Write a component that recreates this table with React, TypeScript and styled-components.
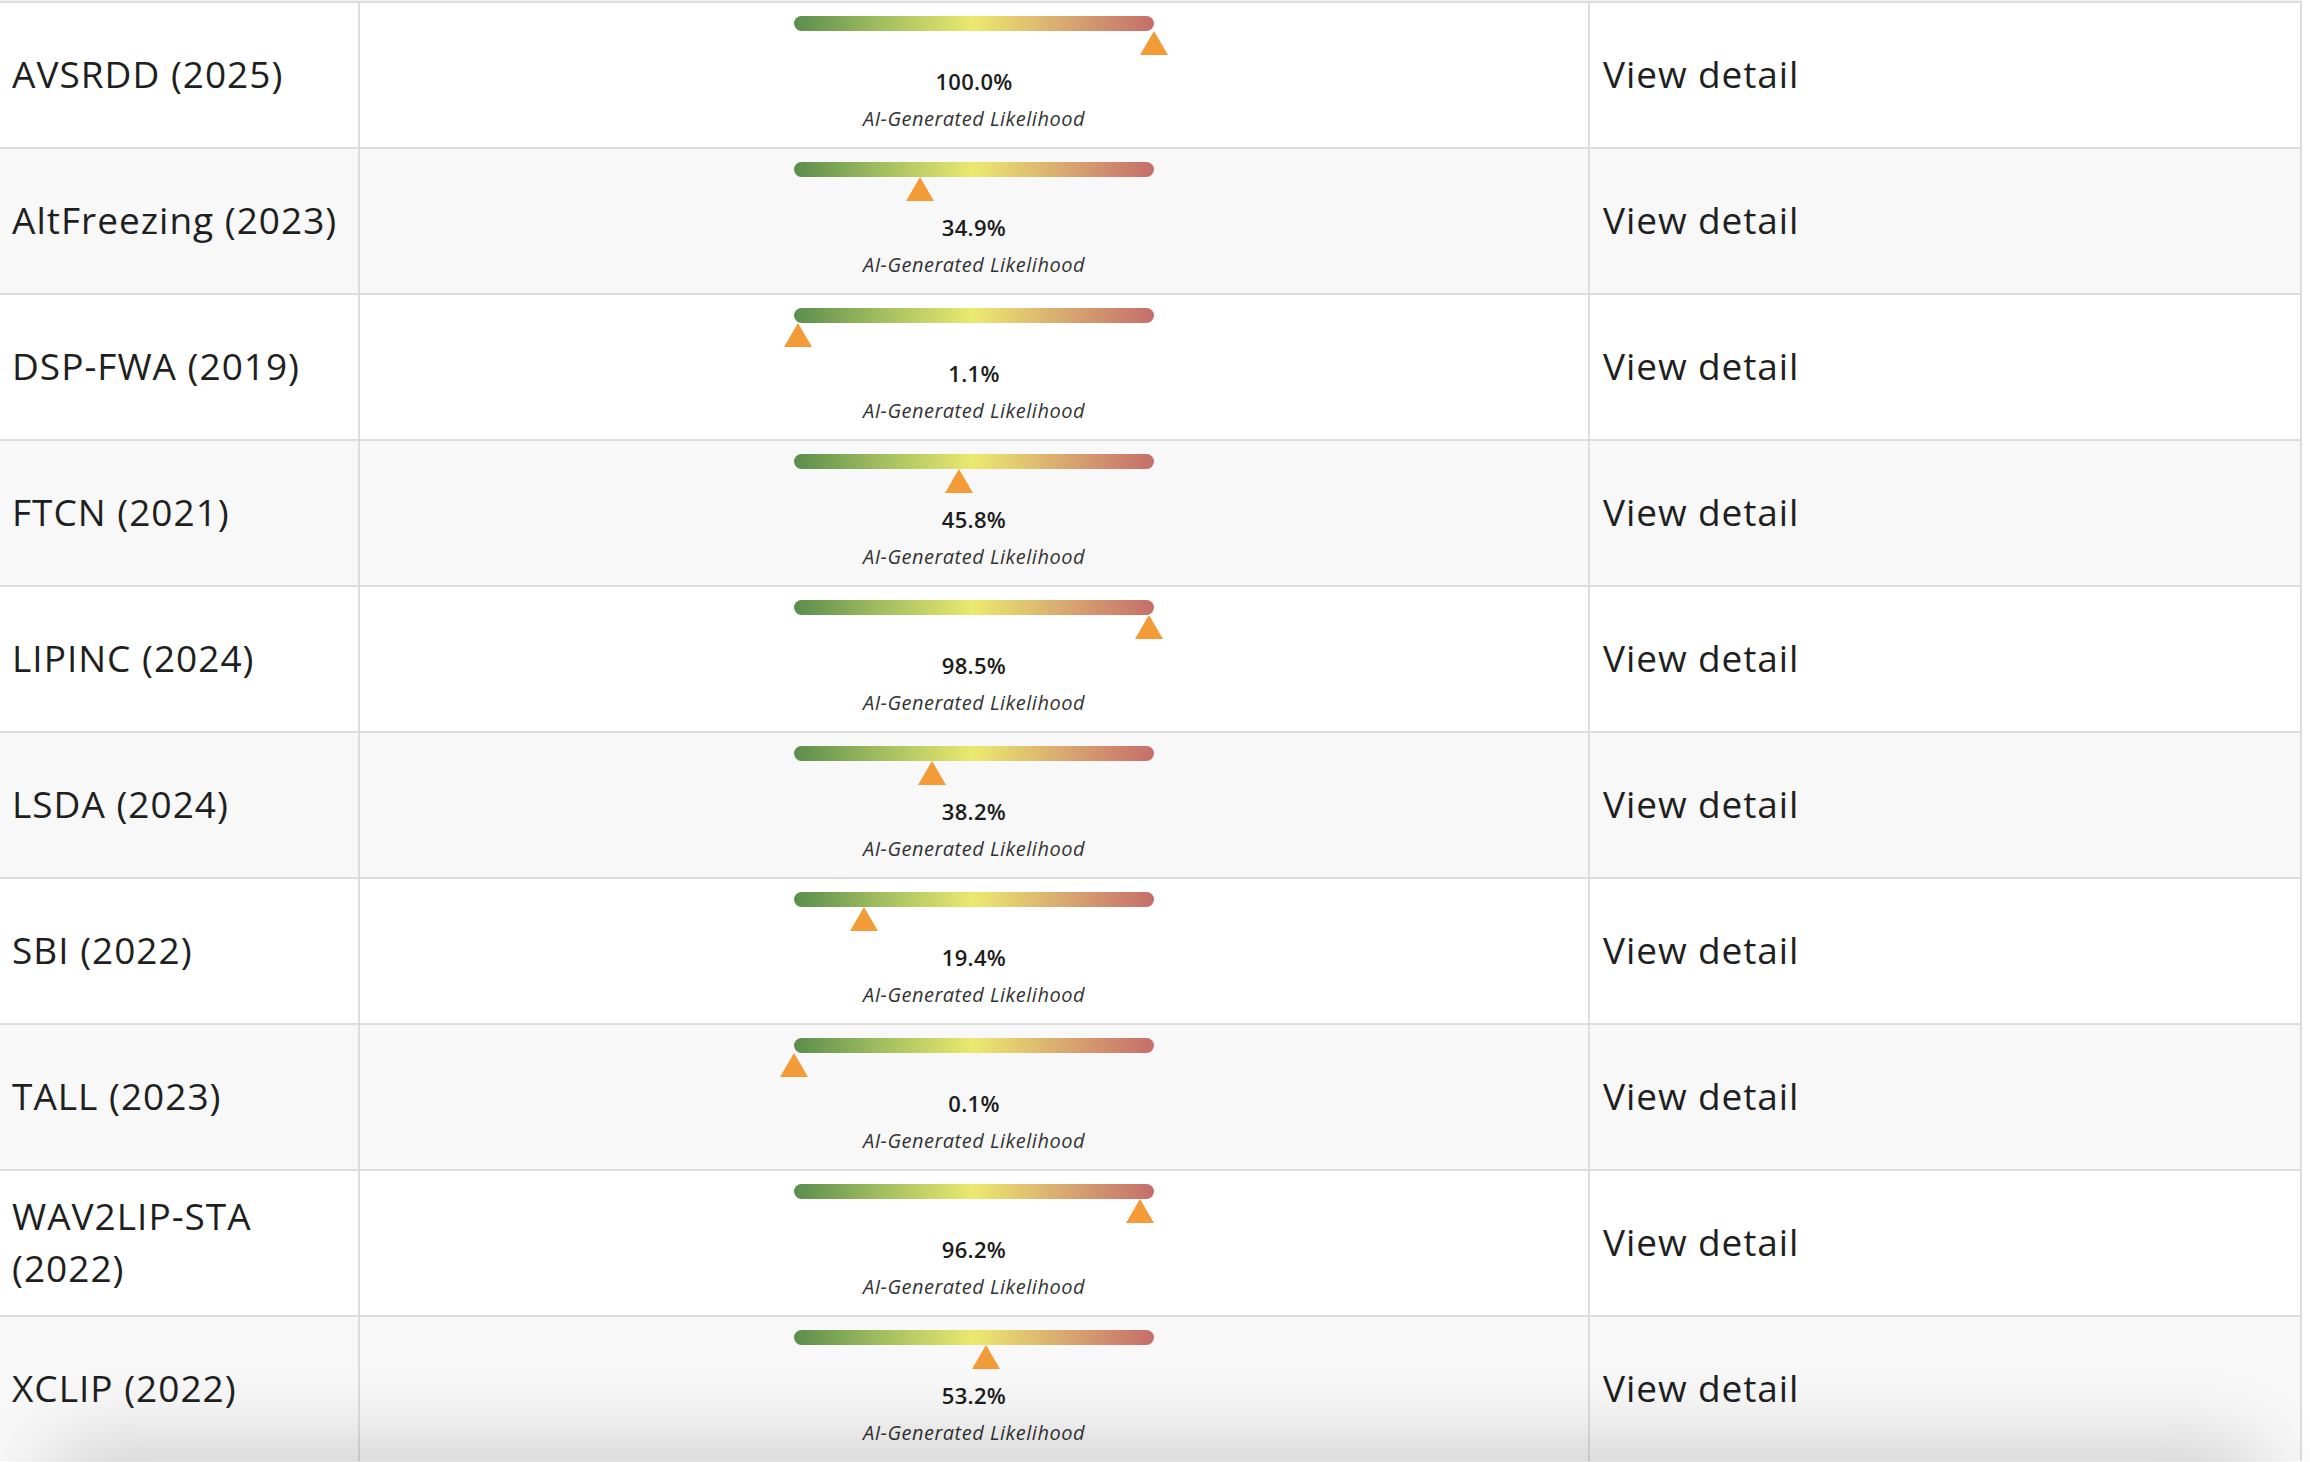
import React from "react";
import styled, { createGlobalStyle } from "styled-components";

const GlobalStyle = createGlobalStyle`
  html, body {
    margin: 0;
    padding: 0;
    background: #ffffff;
    overflow: hidden;
  }
  body {
    font-family: "Open Sans", "Noto Sans", sans-serif;
    color: #222222;
  }
`;

const Page = styled.div`
  width: 2310px;
  height: 1462px;
  overflow: hidden;
  position: relative;
  padding-top: 1px;
  box-sizing: border-box;
`;

const TopStrip = styled.div`
  position: absolute;
  top: 0;
  left: 0;
  width: 2302px;
  height: 1px;
  background: #f2f2f2;
`;

const Table = styled.div`
  width: 2302px;
  display: flex;
  flex-direction: column;
`;

const Row = styled.div<{ $shade: boolean }>`
  display: grid;
  grid-template-columns: 360px 1230px 712px;
  height: 146px;
  box-sizing: border-box;
  border-top: 2px solid #dddddd;
  background: ${(p) => (p.$shade ? "#f8f8f8" : "#ffffff")};
`;

const Cell = styled.div`
  box-sizing: border-box;
  border-right: 2px solid #dddddd;
  display: flex;
  min-width: 0;
`;

const NameCell = styled(Cell)`
  align-items: center;
  padding: 0 6px 3px 12px;
  font-size: 37px;
  line-height: 52px;
  color: #1f1f1f;
  letter-spacing: 1px;
`;

const ScoreCell = styled(Cell)`
  flex-direction: column;
  align-items: center;
  padding-top: 13px;
`;

const DetailCell = styled(Cell)`
  align-items: center;
  padding: 0 13px 3px 13px;
`;

const DetailLink = styled.a`
  font-size: 37px;
  line-height: 52px;
  color: #1f1f1f;
  text-decoration: none;
  letter-spacing: 0.9px;
  cursor: pointer;
`;

const Gauge = styled.div`
  position: relative;
  width: 360px;
  height: 39px;
`;

const Bar = styled.div`
  width: 360px;
  height: 15px;
  border-radius: 8px;
  background: linear-gradient(
    to right,
    #5a8d4d 0%,
    #a4bf60 25%,
    #ebe96f 50%,
    #d8a870 75%,
    #c56e6b 100%
  );
`;

const Marker = styled.div`
  position: absolute;
  top: 15px;
  width: 0;
  height: 0;
  border-left: 14px solid transparent;
  border-right: 14px solid transparent;
  border-bottom: 24px solid #f39b37;
  transform: translateX(-14px);
`;

const Percent = styled.div`
  margin-top: 13px;
  font-size: 22px;
  line-height: 26px;
  font-weight: 600;
  color: #1c1c1c;
  letter-spacing: 0.3px;
`;

const Caption = styled.div`
  margin-top: 13px;
  font-size: 20px;
  line-height: 24px;
  font-style: italic;
  color: #333333;
  letter-spacing: 0.5px;
`;

const BottomShade = styled.div`
  position: fixed;
  left: 60px;
  right: 60px;
  top: 1462px;
  height: 60px;
  border-radius: 40px;
  background: #cfcfcf;
  box-shadow: 0 0 80px 20px rgba(0, 0, 0, 0.16);
  pointer-events: none;
`;

type Item = { name: string; value: number };

const items: Item[] = [
  { name: "AVSRDD (2025)", value: 100.0 },
  { name: "AltFreezing (2023)", value: 34.9 },
  { name: "DSP-FWA (2019)", value: 1.1 },
  { name: "FTCN (2021)", value: 45.8 },
  { name: "LIPINC (2024)", value: 98.5 },
  { name: "LSDA (2024)", value: 38.2 },
  { name: "SBI (2022)", value: 19.4 },
  { name: "TALL (2023)", value: 0.1 },
  { name: "WAV2LIP-STA (2022)", value: 96.2 },
  { name: "XCLIP (2022)", value: 53.2 },
];

export default function App() {
  return (
    <>
      <GlobalStyle />
      <Page>
        <TopStrip />
        <Table>
          {items.map((it, i) => (
            <Row key={it.name} $shade={i % 2 === 1}>
              <NameCell>{it.name}</NameCell>
              <ScoreCell>
                <Gauge>
                  <Bar />
                  <Marker style={{ left: `${it.value}%` }} />
                </Gauge>
                <Percent>{it.value.toFixed(1)}%</Percent>
                <Caption>AI-Generated Likelihood</Caption>
              </ScoreCell>
              <DetailCell>
                <DetailLink>View detail</DetailLink>
              </DetailCell>
            </Row>
          ))}
        </Table>
        <BottomShade />
      </Page>
    </>
  );
}
